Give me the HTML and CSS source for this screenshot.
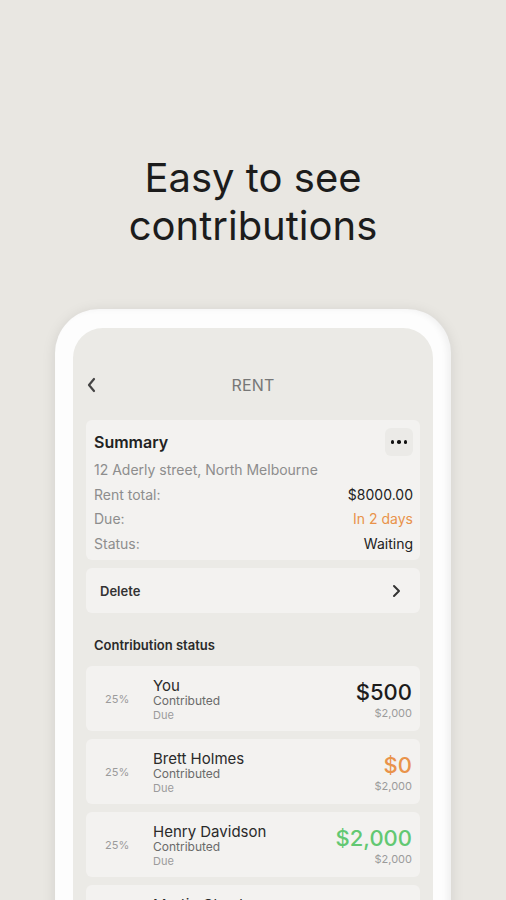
FILE: index.html
```html
<!DOCTYPE html>
<html lang="en">
<head>
    <meta charset="UTF-8">
    <meta name="viewport" content="width=device-width, initial-scale=1.0">
    <title>Easy to see contributions</title>
    <link rel="stylesheet" href="styles.css">
</head>
<body>
    <h1 class="headline">Easy to see<br>contributions</h1>

    <div class="phone">
        <div class="screen">
            <div class="topbar">
                <svg class="back" width="12" height="16" viewBox="0 0 12 16">
                    <path d="M8 2 L3 8 L8 14" fill="none" stroke="#444" stroke-width="2.2" stroke-linecap="round" stroke-linejoin="round"/>
                </svg>
                <span class="topbar-title">RENT</span>
            </div>

            <div class="card summary">
                <div class="summary-head">
                    <strong>Summary</strong>
                    <button class="more"><span></span><span></span><span></span></button>
                </div>
                <div class="line muted">12 Aderly street, North Melbourne</div>
                <div class="line"><span class="muted">Rent total:</span><span>$8000.00</span></div>
                <div class="line"><span class="muted">Due:</span><span class="orange">In 2 days</span></div>
                <div class="line"><span class="muted">Status:</span><span>Waiting</span></div>
            </div>

            <div class="card delete">
                <span>Delete</span>
                <svg width="10" height="16" viewBox="0 0 10 16">
                    <path d="M3 3 L8 8 L3 13" fill="none" stroke="#333" stroke-width="2" stroke-linecap="round" stroke-linejoin="round"/>
                </svg>
            </div>

            <div class="section-label">Contribution status</div>

            <div class="contributions">
                <div class="card person">
                    <div class="pct">25%</div>
                    <div class="who">
                        <div class="name">You</div>
                        <div class="sub">Contributed</div>
                        <div class="due">Due</div>
                    </div>
                    <div class="money">
                        <div class="amount">$500</div>
                        <div class="total">$2,000</div>
                    </div>
                </div>
                <div class="card person">
                    <div class="pct">25%</div>
                    <div class="who">
                        <div class="name">Brett Holmes</div>
                        <div class="sub">Contributed</div>
                        <div class="due">Due</div>
                    </div>
                    <div class="money">
                        <div class="amount orange">$0</div>
                        <div class="total">$2,000</div>
                    </div>
                </div>
                <div class="card person">
                    <div class="pct">25%</div>
                    <div class="who">
                        <div class="name">Henry Davidson</div>
                        <div class="sub">Contributed</div>
                        <div class="due">Due</div>
                    </div>
                    <div class="money">
                        <div class="amount green">$2,000</div>
                        <div class="total">$2,000</div>
                    </div>
                </div>
                <div class="card person">
                    <div class="pct">25%</div>
                    <div class="who">
                        <div class="name">Martin Chester</div>
                        <div class="sub">Contributed</div>
                        <div class="due">Due</div>
                    </div>
                    <div class="money">
                        <div class="amount">$1,000</div>
                        <div class="total">$2,000</div>
                    </div>
                </div>
            </div>
        </div>
    </div>
</body>
</html>
```

FILE: styles.css
```css
body {
    margin: 0;
    width: 506px;
    height: 900px;
    overflow: hidden;
    background-color: #e9e7e2;
    font-family: Inter, "Noto Sans", sans-serif;
    color: #2a2a2a;
}

.headline {
    margin: 154px 0 0;
    text-align: center;
    font-size: 40px;
    line-height: 48px;
    font-weight: 400;
    color: #1c1c1c;
}

.phone {
    width: 360px;
    margin: 59px auto 0;
    padding: 19px 18px 0;
    background-color: #fdfdfd;
    border-radius: 44px 44px 0 0;
    box-shadow: 0 2px 14px rgba(0, 0, 0, 0.10), inset -4px 0 6px rgba(0, 0, 0, 0.05);
    height: 700px;
}

.screen {
    background-color: #ebeae6;
    border-radius: 30px 30px 0 0;
    padding: 37px 13px 0;
    height: 100%;
}

.topbar {
    position: relative;
    height: 40px;
    display: flex;
    align-items: center;
    justify-content: center;
}

.back {
    position: absolute;
    left: 0;
    top: 12px;
}

.topbar-title {
    font-size: 16px;
    color: #777;
    letter-spacing: 0.2px;
}

.card {
    background-color: #f3f2f0;
    border-radius: 6px;
}

.summary {
    margin-top: 15px;
    padding: 8px 7px 4px 8px;
    font-size: 14px;
}

.summary-head {
    display: flex;
    justify-content: space-between;
    align-items: center;
    height: 28px;
    margin-bottom: 2px;
}

.summary-head strong {
    font-size: 16px;
    font-weight: 600;
    color: #222;
}

.more {
    width: 28px;
    height: 28px;
    border: none;
    border-radius: 6px;
    background-color: #ebeae7;
    display: flex;
    align-items: center;
    justify-content: center;
    gap: 3px;
    padding: 0;
}

.more span {
    width: 3.5px;
    height: 3.5px;
    border-radius: 50%;
    background-color: #111;
}

.line {
    display: flex;
    justify-content: space-between;
    line-height: 24.5px;
    color: #222;
}

.muted {
    color: #8d8d8d;
}

.orange,
.amount.orange {
    color: #e9934a;
}

.green,
.amount.green {
    color: #62c872;
}

.delete {
    margin-top: 8px;
    height: 45px;
    display: flex;
    align-items: center;
    justify-content: space-between;
    padding: 0 19px 0 14px;
    font-size: 13px;
    font-weight: 600;
    color: #333;
}

.section-label {
    margin-top: 22px;
    line-height: 20px;
    padding-left: 8px;
    font-size: 13px;
    font-weight: 600;
    color: #2a2a2a;
}

.contributions {
    margin-top: 11px;
    display: flex;
    flex-direction: column;
    gap: 8px;
}

.person {
    height: 65px;
    display: flex;
    align-items: center;
    padding: 0 8px 0 19px;
}

.pct {
    width: 48px;
    font-size: 11px;
    color: #9b9b9b;
}

.who {
    flex: 1;
    padding-top: 2px;
}

.name {
    font-size: 15px;
    line-height: 17px;
    color: #2a2a2a;
}

.sub {
    font-size: 12px;
    line-height: 14px;
    color: #6a6a6a;
}

.due {
    font-size: 11px;
    line-height: 14px;
    color: #9b9b9b;
}

.money {
    text-align: right;
    padding-top: 3px;
}

.amount {
    font-size: 22px;
    line-height: 26px;
    font-weight: 500;
    color: #1c1c1c;
}

.total {
    font-size: 11px;
    line-height: 16px;
    color: #9b9b9b;
}
```
